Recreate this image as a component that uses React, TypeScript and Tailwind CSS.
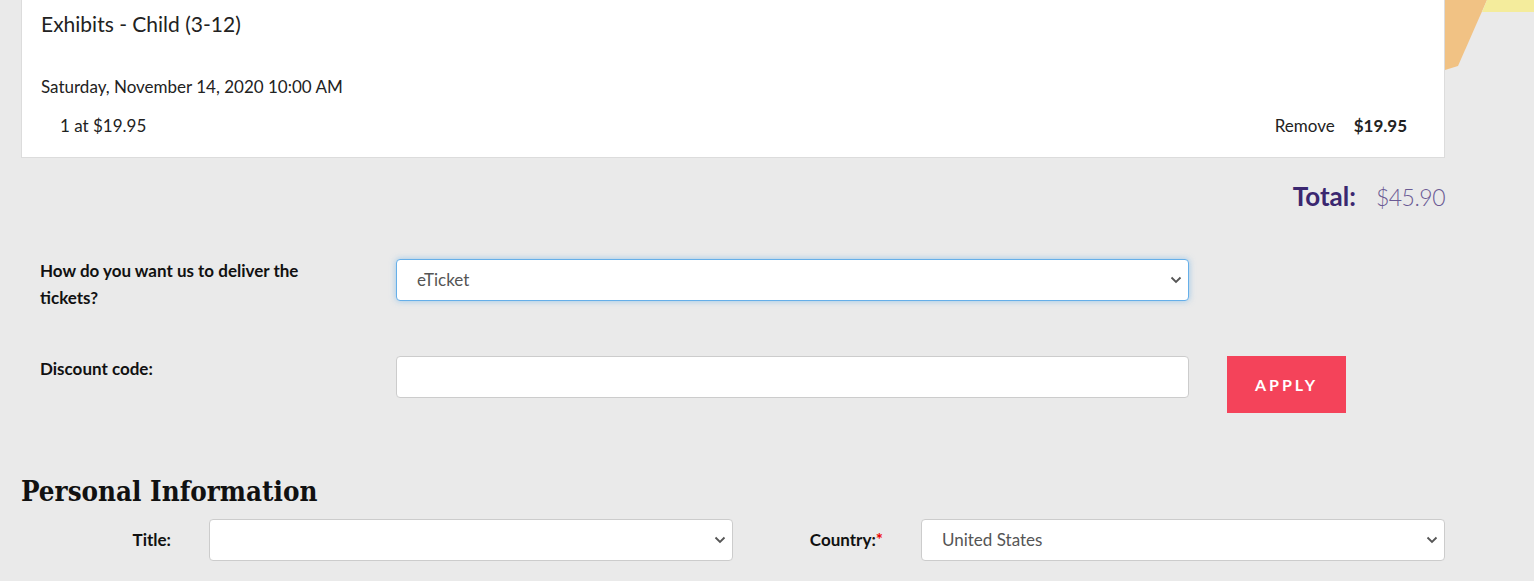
import React from "react";

function Chevron() {
  return (
    <svg width="12" height="8" viewBox="0 0 12 8" className="shrink-0">
      <path d="M1.5 1.5 L6 6 L10.5 1.5" fill="none" stroke="#555" strokeWidth="1.8" />
    </svg>
  );
}

function Select({ value, focused }: { value?: string; focused?: boolean }) {
  return (
    <div
      className={
        "flex h-[42px] items-center justify-between rounded bg-white pl-5 pr-[6px] text-[17px] text-[#555] " +
        (focused
          ? "border border-[#66afe9] shadow-[0_0_6px_rgba(102,175,233,0.6)]"
          : "border border-[#ccc]")
      }
    >
      <span>{value ?? ""}</span>
      <Chevron />
    </div>
  );
}

export default function App() {
  return (
    <div className="relative min-h-screen overflow-hidden bg-[#eaeaea] font-['Lato',sans-serif] text-[#222]">
      <svg className="absolute right-0 top-0" width="100" height="70" viewBox="0 0 100 70">
        <polygon points="1445,0 1487,0 1458,66 1445,70" transform="translate(-1434,0)" fill="#f1c284" />
        <polygon points="1487,0 1534,0 1534,12 1482,12" transform="translate(-1434,0)" fill="#f4ec9c" />
      </svg>

      <div className="relative w-[1424px] ml-[21px]">
        <div className="border border-t-0 border-[#dcdcdc] bg-white pl-[19px] pr-[37px] pt-[10px] pb-[19px]">
          <div className="text-[21px] leading-7 text-[#222]">Exhibits - Child (3-12)</div>
          <div className="mt-[37px] text-[17px] leading-6">Saturday, November 14, 2020 10:00 AM</div>
          <div className="mt-[15px] flex items-center justify-between pl-[19px] text-[17px] leading-6">
            <span>1 at $19.95</span>
            <div className="flex items-center gap-[19px]">
              <span>Remove</span>
              <span className="font-bold">$19.95</span>
            </div>
          </div>
        </div>

        <div className="mt-[19px] flex items-baseline justify-end gap-5">
          <span className="text-[26px] font-bold text-[#3b2770]">Total:</span>
          <span className="text-[23px] font-light tracking-[-0.5px] text-[#6a5a94]">$45.90</span>
        </div>

        <div className="mt-[41px] flex items-start pl-[19px]">
          <div className="w-[356px] pr-[50px] text-[17px] font-bold leading-[27px] text-[#111]">
            How do you want us to deliver the tickets?
          </div>
          <div className="w-[793px] pt-[2px]">
            <Select value="eTicket" focused />
          </div>
        </div>

        <div className="mt-[45px] flex items-start pl-[19px]">
          <div className="w-[356px] pt-[1px] text-[17px] font-bold leading-[24px] text-[#111]">Discount code:</div>
          <div className="h-[42px] w-[793px] rounded border border-[#ccc] bg-white" />
          <button className="ml-[38px] h-[57px] w-[119px] bg-[#f4435a] text-[16px] font-bold tracking-[3px] text-white">
            APPLY
          </button>
        </div>

        <h2 className="mt-[62px] font-['DejaVu_Serif_Condensed',serif] text-[27.5px] font-bold leading-8 text-[#111]">
          Personal Information
        </h2>

        <div className="mt-[12px] flex">
          <div className="flex w-[712px] items-center">
            <div className="w-[150px] text-right text-[17px] font-bold text-[#111]">Title:</div>
            <div className="ml-[38px] w-[524px]">
              <Select />
            </div>
          </div>
          <div className="flex w-[712px] items-center">
            <div className="w-[150px] text-right text-[17px] font-bold text-[#111]">
              Country:<span className="text-[#e00]">*</span>
            </div>
            <div className="ml-[38px] w-[524px]">
              <Select value="United States" />
            </div>
          </div>
        </div>
      </div>
    </div>
  );
}
